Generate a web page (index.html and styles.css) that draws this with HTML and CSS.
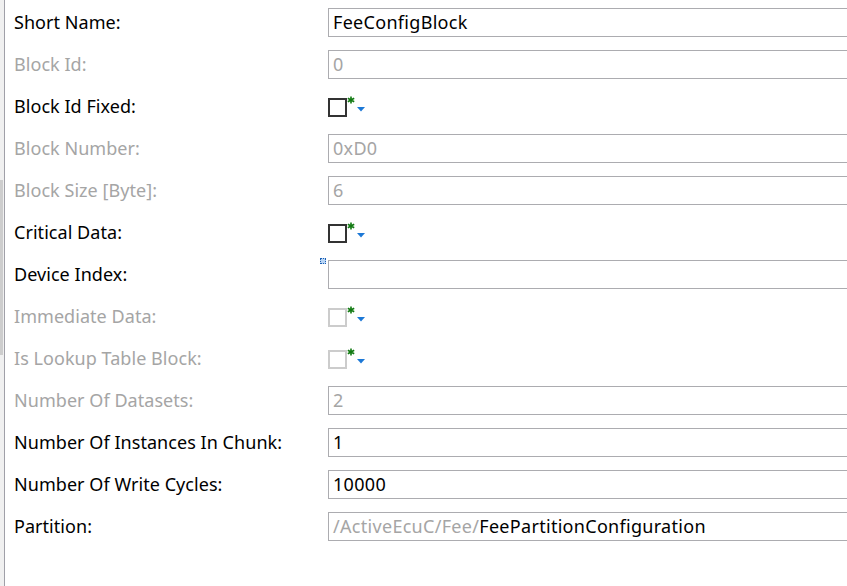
FILE: index.html
```html
<!DOCTYPE html>
<html lang="en">
<head>
    <meta charset="UTF-8">
    <title>FeeConfigBlock</title>
    <link rel="stylesheet" href="styles.css">
</head>
<body>
    <div class="page">
        <!-- left scroll strip -->
        <div class="side-bar"><div class="side-thumb"></div></div>

        <div class="form">
            <div class="label">Short Name:</div>
            <div class="value"><div class="field">FeeConfigBlock</div></div>

            <div class="label disabled">Block Id:</div>
            <div class="value"><div class="field disabled">0</div></div>

            <div class="label">Block Id Fixed:</div>
            <div class="value">
                <span class="check"></span>
                <svg class="star" width="8" height="8" viewBox="0 0 8 8"><path d="M4 0.5V7.5M0.8 2.2L7.2 5.8M0.8 5.8L7.2 2.2" stroke="#127a12" stroke-width="1.6"/></svg>
                <svg class="drop" width="8" height="5" viewBox="0 0 8 5"><path d="M0 0H8L4 4.5Z" fill="#1c78d6"/></svg>
            </div>

            <div class="label disabled">Block Number:</div>
            <div class="value"><div class="field disabled">0xD0</div></div>

            <div class="label disabled">Block Size [Byte]:</div>
            <div class="value"><div class="field disabled">6</div></div>

            <div class="label">Critical Data:</div>
            <div class="value">
                <span class="check"></span>
                <svg class="star" width="8" height="8" viewBox="0 0 8 8"><path d="M4 0.5V7.5M0.8 2.2L7.2 5.8M0.8 5.8L7.2 2.2" stroke="#127a12" stroke-width="1.6"/></svg>
                <svg class="drop" width="8" height="5" viewBox="0 0 8 5"><path d="M0 0H8L4 4.5Z" fill="#1c78d6"/></svg>
            </div>

            <div class="label">Device Index:</div>
            <div class="value"><span class="marker"></span><div class="field"></div></div>

            <div class="label disabled">Immediate Data:</div>
            <div class="value">
                <span class="check disabled"></span>
                <svg class="star" width="8" height="8" viewBox="0 0 8 8"><path d="M4 0.5V7.5M0.8 2.2L7.2 5.8M0.8 5.8L7.2 2.2" stroke="#127a12" stroke-width="1.6"/></svg>
                <svg class="drop" width="8" height="5" viewBox="0 0 8 5"><path d="M0 0H8L4 4.5Z" fill="#1c78d6"/></svg>
            </div>

            <div class="label disabled">Is Lookup Table Block:</div>
            <div class="value">
                <span class="check disabled"></span>
                <svg class="star" width="8" height="8" viewBox="0 0 8 8"><path d="M4 0.5V7.5M0.8 2.2L7.2 5.8M0.8 5.8L7.2 2.2" stroke="#127a12" stroke-width="1.6"/></svg>
                <svg class="drop" width="8" height="5" viewBox="0 0 8 5"><path d="M0 0H8L4 4.5Z" fill="#1c78d6"/></svg>
            </div>

            <div class="label disabled">Number Of Datasets:</div>
            <div class="value"><div class="field disabled">2</div></div>

            <div class="label">Number Of Instances In Chunk:</div>
            <div class="value"><div class="field">1</div></div>

            <div class="label">Number Of Write Cycles:</div>
            <div class="value"><div class="field">10000</div></div>

            <div class="label">Partition:</div>
            <div class="value"><div class="field"><span class="path">/ActiveEcuC/Fee/</span>FeePartitionConfiguration</div></div>
        </div>
    </div>
</body>
</html>
```

FILE: styles.css
```css
body {
    margin: 0;
    background-color: #ffffff;
    font-family: 'Noto Sans', sans-serif;
    font-size: 18px;
    color: #000000;
    overflow: hidden;
}

.page {
    display: flex;
    height: 586px;
}

.side-bar {
    width: 4px;
    background-color: #f0f0f0;
    border-right: 1px solid #a0a0a8;
    padding-top: 180px;
    flex-shrink: 0;
}

.side-thumb {
    width: 3px;
    height: 175px;
    background-color: #cdcdcd;
}

.form {
    display: grid;
    grid-template-columns: 314px 560px;
    grid-auto-rows: 42px;
    padding-top: 1px;
    padding-left: 9px;
}

.label {
    display: flex;
    align-items: center;
    white-space: nowrap;
    letter-spacing: 0.05px;
}

.label.disabled {
    color: #a5a5a5;
}

.value {
    position: relative;
    display: flex;
    align-items: center;
}

.field {
    box-sizing: border-box;
    width: 100%;
    height: 29px;
    border: 1px solid #acacb0;
    padding: 0 4px;
    line-height: 26px;
    white-space: nowrap;
    letter-spacing: 0.3px;
}

.field.disabled {
    color: #a5a5a5;
}

.path {
    color: #a5a5a5;
}

.check {
    box-sizing: border-box;
    width: 19px;
    height: 19px;
    border: 2px solid #333333;
    margin-top: 2px;
}

.check.disabled {
    border-color: #cccccc;
}

.star {
    align-self: flex-start;
    margin-top: 11px;
    margin-left: 0;
}

/* little blue drop arrow */
.drop {
    margin-left: 2px;
    margin-top: 6px;
}

/* dotted marker before Device Index */
.marker {
    position: absolute;
    left: -8px;
    top: 5px;
    width: 4px;
    height: 4px;
    background-color: #b8d4f4;
    border: 1px dotted #1a5fb4;
}
```
